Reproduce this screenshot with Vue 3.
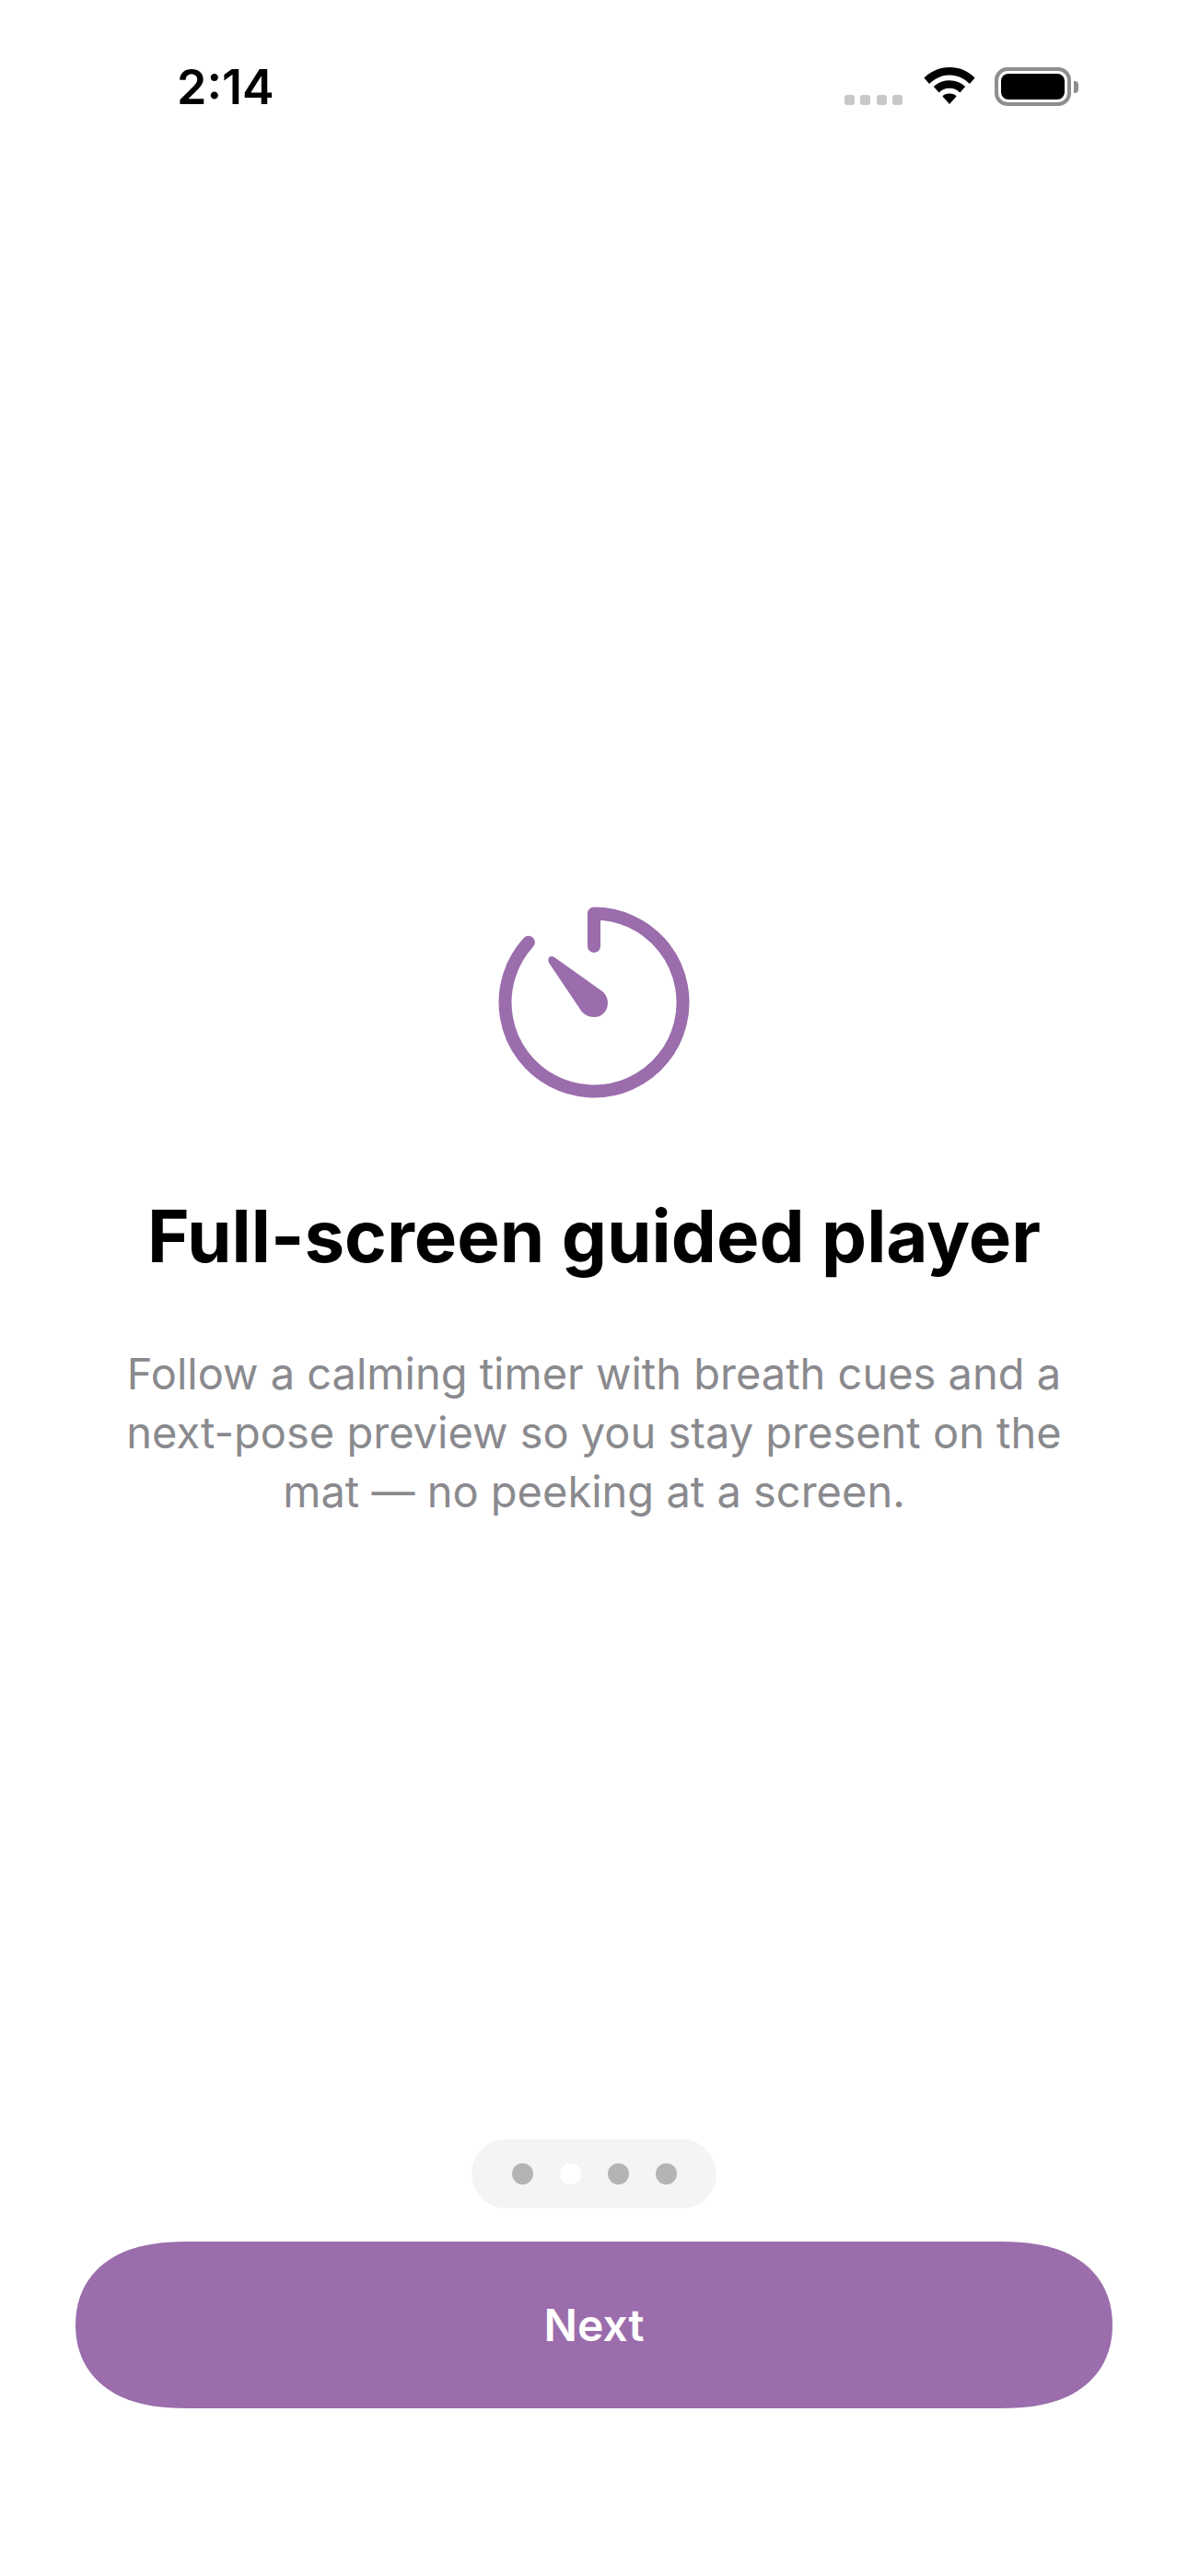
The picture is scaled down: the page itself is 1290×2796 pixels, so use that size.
<template>
  <div class="screen">
    <div class="status-bar">
      <span class="time">2:14</span>
      <div class="status-icons">
        <div class="signal">
          <i v-for="n in 4" :key="n"></i>
        </div>
        <svg class="wifi" width="56" height="40" viewBox="0 0 58 42">
          <path d="M29 0C18 0 8 4 0 12l6 7C12 13 20 9 29 9s17 4 23 10l6-7C50 4 40 0 29 0Z" fill="#000" />
          <path d="M29 15c-7 0-13 2.500-18 7l6 7c3-3 7-5 12-5s9 2 12 5l6-7c-5-4.500-11-7-18-7Z" fill="#000" />
          <path d="M29 30c-3.500 0-6 1-8 3l8 9 8-9c-2-2-4.500-3-8-3Z" fill="#000" />
        </svg>
        <div class="battery">
          <div class="battery-shell"><div class="battery-fill"></div></div>
          <div class="battery-cap"></div>
        </div>
      </div>
    </div>

    <div class="hero">
      <svg class="timer" width="216" height="216" viewBox="0 0 216 216">
        <path d="M36.900 42.800A96.500 96.500 0 1 0 108 11.500V47" fill="none" stroke="#9b6dac" stroke-width="14" stroke-linecap="round" stroke-linejoin="round" />
        <path d="M59 65C57 60 60 56 65 59L117 96C128 105 123 124 108 124C102 124 97 121 94 117Z" fill="#9b6dac" />
      </svg>
      <h1 class="title">Full-screen guided player</h1>
      <p class="body">Follow a calming timer with breath cues and a next-pose preview so you stay present on the mat — no peeking at a screen.</p>
    </div>

    <div class="pager">
      <span v-for="(dot, index) in dots" :key="index" class="dot" :class="{ active: dot }"></span>
    </div>
    <button class="next">Next</button>
  </div>
</template>

<script setup>
// second page of the onboarding is the active one
const dots = [false, true, false, false]
</script>

<style>
html, body {
  margin: 0;
  background: #fff;
}
</style>

<style scoped>
.screen {
  width: 1290px;
  height: 2796px;
  display: flex;
  flex-direction: column;
  align-items: center;
  background: #fff;
  font-family: Inter, "Liberation Sans", sans-serif;
  overflow: hidden;
}

.status-bar {
  width: 100%;
  height: 134px;
  box-sizing: border-box;
  padding: 65px 119px 0 192px;
  display: flex;
  justify-content: space-between;
  align-items: flex-start;
}

.time {
  font-size: 52px;
  font-weight: 600;
  line-height: 60px;
  color: #000;
}

.status-icons {
  display: flex;
  align-items: flex-start;
  padding-top: 8px;
}

.signal {
  display: flex;
  gap: 6.500px;
  margin-top: 30px;
  margin-right: 23px;
}

.signal i {
  width: 11px;
  height: 11px;
  border-radius: 3px;
  background: #c8c8c8;
}

.wifi {
  margin-right: 21px;
}

.battery {
  display: flex;
  align-items: center;
}

.battery-shell {
  width: 83px;
  height: 42px;
  box-sizing: border-box;
  border: 4px solid #8e8e8e;
  border-radius: 14px;
  padding: 3px;
}

.battery-fill {
  height: 100%;
  border-radius: 8px;
  background: #000;
}

.battery-cap {
  width: 5px;
  height: 13px;
  margin-left: 3px;
  border-radius: 0 4px 4px 0;
  background: #8e8e8e;
}

.hero {
  display: flex;
  flex-direction: column;
  align-items: center;
  margin-top: 846px;
  flex: 1;
}

.timer {
  display: block;
}

.title {
  margin: 100px 0 0;
  font-size: 78px;
  line-height: 92px;
  font-weight: 700;
  color: #000;
  white-space: nowrap;
}

.body {
  width: 1060px;
  margin: 71px 0 0;
  font-size: 47px;
  line-height: 64px;
  font-weight: 400;
  text-align: center;
  color: #8a8a8e;
}

.pager {
  width: 266px;
  height: 75px;
  border-radius: 38px;
  background: #f4f4f4;
  display: flex;
  align-items: center;
  justify-content: center;
  gap: 29px;
}

.dot {
  width: 23px;
  height: 23px;
  border-radius: 50%;
  background: #b4b4b4;
}

.dot.active {
  background: #fff;
}

.next {
  width: 1126px;
  height: 181px;
  margin: 36px 0 182px;
  border: none;
  /* continuous corners, a plain radius comes out too round */
  clip-path: path("M121 0H1005C1034 0 1054 4 1068 9C1098 20 1126 45 1126 90.500C1126 136 1098 161 1068 172C1054 177 1034 181 1005 181H121C92 181 72 177 58 172C28 161 0 136 0 90.500C0 45 28 20 58 9C72 4 92 0 121 0Z");
  background: #9b6dac;
  color: #fff;
  font-family: inherit;
  font-size: 48px;
  font-weight: 600;
}
</style>
